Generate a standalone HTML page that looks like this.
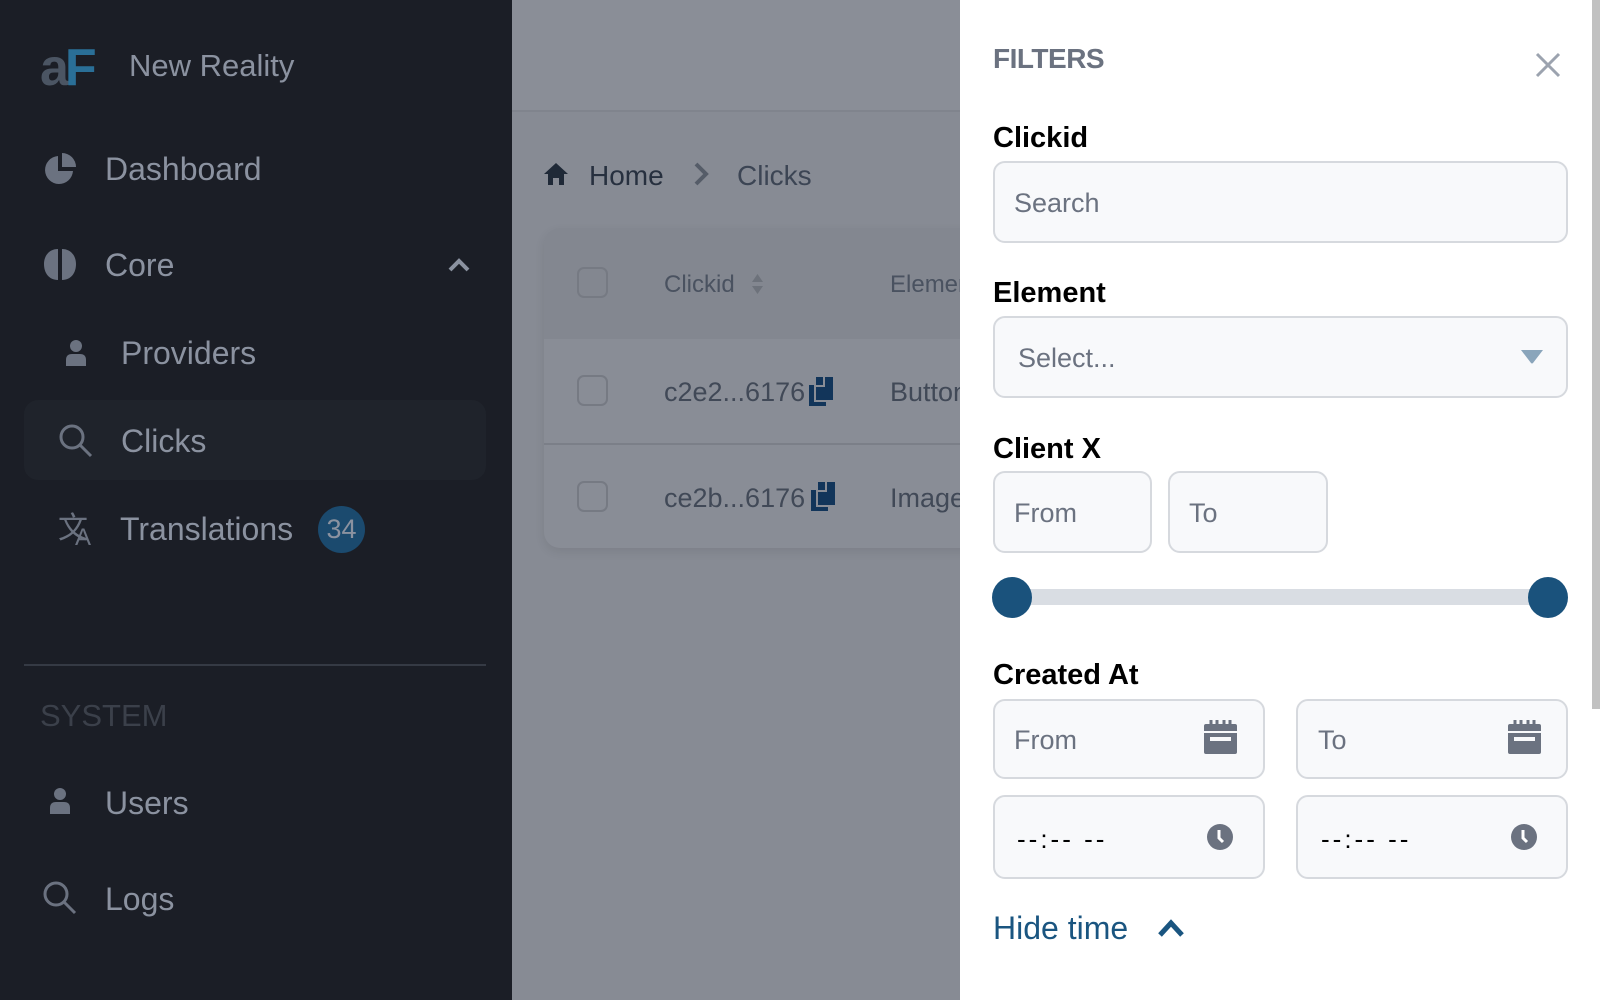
<!DOCTYPE html>
<html><head><meta charset="utf-8"><style>
*{box-sizing:border-box;margin:0;padding:0}
body{width:1600px;height:1000px;overflow:hidden;position:relative;font-family:"Liberation Sans",sans-serif;background:#878b94}
.a{position:absolute;white-space:nowrap;line-height:1}
#side{position:absolute;left:0;top:0;width:512px;height:1000px;background:#1b1e26}
.nav{color:#8b92a0;font-size:32px}
.ic{position:absolute}
#panel{position:absolute;left:960px;top:0;width:640px;height:1000px;background:#fff}
.lbl{color:#000;font-size:29px;font-weight:bold}
.inp{position:absolute;background:#f8f9fb;border:2px solid #d6d9de;border-radius:12px}
.ph{position:absolute;color:#6b7280;font-size:27px;line-height:1}
</style></head><body>
<div id="side">
  <div class="a" style="left:40px;top:42px;font-size:52px;font-weight:bold;letter-spacing:-4px"><span style="color:#4b5563">a</span><span style="color:#2a6f97">F</span></div>
  <div class="a" style="left:129px;top:50px;font-size:31px;color:#8b92a0">New Reality</div>
  <svg class="ic" style="left:43px;top:152px" width="34" height="33" viewBox="0 0 34 33"><path d="M15 4 A14 14 0 1 0 30 19 L15 19 Z" fill="#6b7280"/><path d="M19 1 A14 14 0 0 1 33 15 L19 15Z" fill="#6b7280"/></svg>
  <div class="a nav" style="left:105px;top:153px">Dashboard</div>
  <svg class="ic" style="left:43px;top:248px" width="34" height="33" viewBox="0 0 34 33"><path d="M15 1 C6 1 1 8 1 16 C1 25 6 32 15 32 Z M19 1 C28 1 33 8 33 16 C33 25 28 32 19 32 Z" fill="#6b7280"/></svg>
  <div class="a nav" style="left:105px;top:249px">Core</div>
  <svg class="ic" style="left:447px;top:257px" width="24" height="16" viewBox="0 0 24 16"><path d="M3 13 L12 4 L21 13" stroke="#8b92a0" stroke-width="4" fill="none"/></svg>
  <svg class="ic" style="left:66px;top:340px" width="20" height="26" viewBox="0 0 20 26"><circle cx="10" cy="6" r="6" fill="#6b7280"/><path d="M0 26 V20 Q0 14 6 14 H14 Q20 14 20 20 V26Z" fill="#6b7280"/></svg>
  <div class="a nav" style="left:121px;top:337px">Providers</div>
  <div style="position:absolute;left:24px;top:400px;width:462px;height:80px;border-radius:14px;background:#1f232b"></div>
  <svg class="ic" style="left:58px;top:423px" width="36" height="36" viewBox="0 0 36 36"><circle cx="14" cy="14" r="11" stroke="#6b7280" stroke-width="3" fill="none"/><path d="M22 22 L33 33" stroke="#6b7280" stroke-width="3"/></svg>
  <div class="a nav" style="left:121px;top:425px">Clicks</div>
  <div class="a" style="left:58px;top:510px;font-size:30px;color:#6b7280;font-family:'Noto Sans CJK SC',sans-serif">文</div>
  <div class="a" style="left:75px;top:526px;font-size:24px;color:#6b7280">A</div>
  <div class="a nav" style="left:120px;top:513px">Translations</div>
  <div style="position:absolute;left:318px;top:506px;width:47px;height:47px;border-radius:50%;background:#1b4a6e;color:#8b92a0;font-size:27px;text-align:center;line-height:47px">34</div>
  <div style="position:absolute;left:24px;top:664px;width:462px;height:2px;background:#353a44"></div>
  <div class="a" style="left:40px;top:700px;font-size:31px;color:#3b404a">SYSTEM</div>
  <svg class="ic" style="left:50px;top:788px" width="20" height="26" viewBox="0 0 20 26"><circle cx="10" cy="6" r="6" fill="#6b7280"/><path d="M0 26 V20 Q0 14 6 14 H14 Q20 14 20 20 V26Z" fill="#6b7280"/></svg>
  <div class="a nav" style="left:105px;top:787px">Users</div>
  <svg class="ic" style="left:42px;top:880px" width="36" height="36" viewBox="0 0 36 36"><circle cx="14" cy="14" r="11" stroke="#6b7280" stroke-width="3" fill="none"/><path d="M22 22 L33 33" stroke="#6b7280" stroke-width="3"/></svg>
  <div class="a nav" style="left:105px;top:883px">Logs</div>
</div>

<div style="position:absolute;left:512px;top:0;width:448px;height:112px;background:#8a8e97;border-bottom:2px solid #80848d"></div>
<svg class="ic" style="left:543px;top:162px" width="26" height="24" viewBox="0 0 26 24"><path d="M13 1 L25 12 H21 V23 H16 V16 H10 V23 H5 V12 H1Z" fill="#1f2937"/></svg>
<div class="a" style="left:589px;top:162px;font-size:28px;color:#27303f">Home</div>
<svg class="ic" style="left:693px;top:162px" width="16" height="24" viewBox="0 0 16 24"><path d="M3 2 L13 12 L3 22" stroke="#555c68" stroke-width="4" fill="none"/></svg>
<div class="a" style="left:737px;top:162px;font-size:28px;color:#3c4554">Clicks</div>

<div style="position:absolute;left:544px;top:228px;width:440px;height:320px;border-radius:16px;background:#898d96;box-shadow:0 4px 10px rgba(0,0,0,.08);overflow:hidden">
  <div style="position:absolute;left:0;top:0;width:100%;height:111px;background:#838790"></div>
  <div style="position:absolute;left:0;top:215px;width:100%;height:2px;background:#7b7f88"></div>
</div>
<div style="position:absolute;left:577px;top:267px;width:31px;height:31px;border:2px solid #767a83;border-radius:7px"></div>
<div class="a" style="left:664px;top:273px;font-size:24px;color:#4a5260">Clickid</div>
<svg class="ic" style="left:751px;top:273px" width="13" height="22" viewBox="0 0 13 22"><path d="M6.5 1 L12 9 H1Z M6.5 21 L12 13 H1Z" fill="#6d727b"/></svg>
<div class="a" style="left:890px;top:273px;font-size:24px;color:#4a5260">Elemen</div>
<div style="position:absolute;left:577px;top:375px;width:31px;height:31px;border:2px solid #767a83;border-radius:7px"></div>
<div class="a" style="left:664px;top:379px;font-size:27px;color:#414957">c2e2...6176</div>
<svg class="ic" style="left:806px;top:376px" width="28" height="31" viewBox="0 0 28 31"><path d="M3 9 H8 V26 H20 V30 H3Z" fill="#12355a"/><path d="M10 1 H17 V9 H10Z M19 1 H27 V24 H10 V11 H19Z" fill="#12355a"/></svg>
<div class="a" style="left:890px;top:379px;font-size:27px;color:#414957">Button</div>
<div style="position:absolute;left:577px;top:481px;width:31px;height:31px;border:2px solid #767a83;border-radius:7px"></div>
<div class="a" style="left:664px;top:485px;font-size:27px;color:#414957">ce2b...6176</div>
<svg class="ic" style="left:808px;top:481px" width="28" height="31" viewBox="0 0 28 31"><path d="M3 9 H8 V26 H20 V30 H3Z" fill="#12355a"/><path d="M10 1 H17 V9 H10Z M19 1 H27 V24 H10 V11 H19Z" fill="#12355a"/></svg>
<div class="a" style="left:890px;top:485px;font-size:27px;color:#414957">Image</div>

<div id="panel">
  <div class="a" style="left:33px;top:45px;font-size:28px;color:#6b7280;font-weight:bold;letter-spacing:-0.5px">FILTERS</div>
  <svg class="ic" style="left:575px;top:52px" width="26" height="26" viewBox="0 0 26 26"><path d="M2 2 L24 24 M24 2 L2 24" stroke="#9ca3af" stroke-width="3"/></svg>
  <div class="a lbl" style="left:33px;top:124px">Clickid</div>
  <div class="inp" style="left:33px;top:161px;width:575px;height:82px"></div>
  <div class="ph" style="left:54px;top:190px">Search</div>
  <div class="a lbl" style="left:33px;top:279px">Element</div>
  <div class="inp" style="left:33px;top:316px;width:575px;height:82px"></div>
  <div class="ph" style="left:58px;top:345px">Select...</div>
  <svg class="ic" style="left:560px;top:348px" width="24" height="16" viewBox="0 0 24 16"><path d="M1 2 H23 L13 15 Q12 16 11 15Z" fill="#8aa5bb"/></svg>
  <div class="a lbl" style="left:33px;top:435px">Client X</div>
  <div class="inp" style="left:33px;top:471px;width:159px;height:82px"></div>
  <div class="ph" style="left:54px;top:500px">From</div>
  <div class="inp" style="left:208px;top:471px;width:160px;height:82px"></div>
  <div class="ph" style="left:229px;top:500px">To</div>
  <div style="position:absolute;left:52px;top:589px;width:520px;height:16px;background:#d9dde3"></div>
  <div style="position:absolute;left:32px;top:577px;width:40px;height:41px;border-radius:50%;background:#1a527c"></div>
  <div style="position:absolute;left:568px;top:577px;width:40px;height:41px;border-radius:50%;background:#1a527c"></div>
  <div class="a lbl" style="left:33px;top:661px">Created At</div>
  <div class="inp" style="left:33px;top:699px;width:272px;height:80px"></div>
  <div class="ph" style="left:54px;top:727px">From</div>
  <svg class="ic" style="left:244px;top:720px" width="33" height="34" viewBox="0 0 33 34"><path d="M0 6 Q0 4 2 4 H31 Q33 4 33 6 V11 H0Z M0 13 H33 V32 Q33 34 31 34 H2 Q0 34 0 32Z" fill="#6b7280"/><path d="M7 0 V5 M13 0 V5 M20 0 V5 M26 0 V5" stroke="#6b7280" stroke-width="3"/><rect x="6" y="17" width="21" height="4" fill="#f8f9fb"/></svg>
  <div class="inp" style="left:336px;top:699px;width:272px;height:80px"></div>
  <div class="ph" style="left:358px;top:727px">To</div>
  <svg class="ic" style="left:548px;top:720px" width="33" height="34" viewBox="0 0 33 34"><path d="M0 6 Q0 4 2 4 H31 Q33 4 33 6 V11 H0Z M0 13 H33 V32 Q33 34 31 34 H2 Q0 34 0 32Z" fill="#6b7280"/><path d="M7 0 V5 M13 0 V5 M20 0 V5 M26 0 V5" stroke="#6b7280" stroke-width="3"/><rect x="6" y="17" width="21" height="4" fill="#f8f9fb"/></svg>
  <div class="inp" style="left:33px;top:795px;width:272px;height:84px"></div>
  <div class="a" style="left:57px;top:826px;font-size:26px;color:#000;letter-spacing:3px">--:-- --</div>
  <svg class="ic" style="left:246px;top:823px" width="28" height="28" viewBox="0 0 28 28"><circle cx="14" cy="14" r="13" fill="#6b7280"/><path d="M13 7 V15 L17 19" stroke="#fff" stroke-width="3" fill="none"/></svg>
  <div class="inp" style="left:336px;top:795px;width:272px;height:84px"></div>
  <div class="a" style="left:361px;top:826px;font-size:26px;color:#000;letter-spacing:3px">--:-- --</div>
  <svg class="ic" style="left:550px;top:823px" width="28" height="28" viewBox="0 0 28 28"><circle cx="14" cy="14" r="13" fill="#6b7280"/><path d="M13 7 V15 L17 19" stroke="#fff" stroke-width="3" fill="none"/></svg>
  <div class="a" style="left:33px;top:912px;font-size:32px;color:#1a5580">Hide time</div>
  <svg class="ic" style="left:197px;top:918px" width="28" height="20" viewBox="0 0 28 20"><path d="M3 17 L14 5 L25 17" stroke="#1a5580" stroke-width="5" fill="none"/></svg>
  <div style="position:absolute;left:632px;top:0;width:8px;height:709px;background:#c1c1c1"></div>
</div>
</body></html>
